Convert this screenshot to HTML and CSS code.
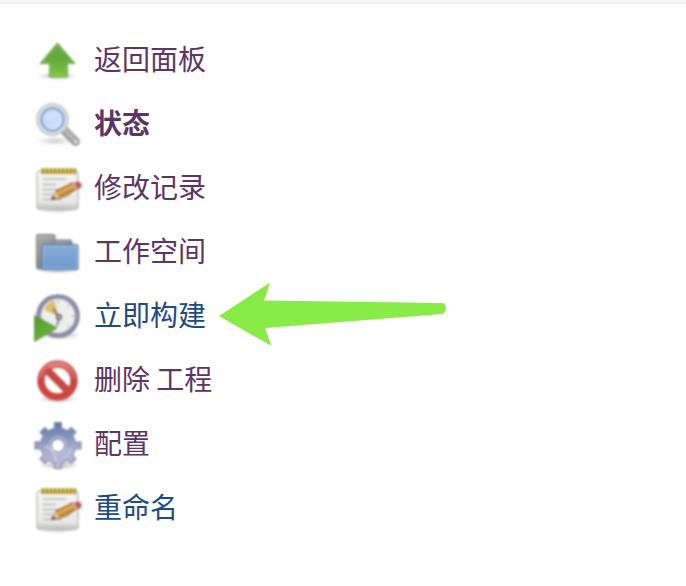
FILE: index.html
```
<!DOCTYPE html>
<html lang="zh-CN">
<head>
<meta charset="utf-8">
<meta name="viewport" content="width=device-width, initial-scale=1">
<title>工程</title>
<link rel="stylesheet" href="styles.css">
</head>
<body>
<svg class="defs" aria-hidden="true">
  <defs>
    <linearGradient id="green" x1="0" y1="0" x2="0" y2="1"><stop offset="0" stop-color="#6aa948"/><stop offset=".5" stop-color="#62a93b"/><stop offset="1" stop-color="#85c83e"/></linearGradient>
    <radialGradient id="shade"><stop offset="0" stop-color="#000" stop-opacity=".3"/><stop offset="1" stop-color="#000" stop-opacity="0"/></radialGradient>
    <linearGradient id="lens" x1="0" y1="0" x2="1" y2="1"><stop offset="0" stop-color="#b3cff1"/><stop offset=".6" stop-color="#c9def7"/><stop offset="1" stop-color="#e4effc"/></linearGradient>
    <linearGradient id="paper" x1="0" y1="0" x2="0" y2="1"><stop offset="0" stop-color="#f4f4f3"/><stop offset=".8" stop-color="#e9e9e8"/><stop offset="1" stop-color="#cfcfce"/></linearGradient>
    <linearGradient id="back" x1="0" y1="0" x2="1" y2="1"><stop offset="0" stop-color="#adadad"/><stop offset="1" stop-color="#666"/></linearGradient>
    <linearGradient id="front" x1="0" y1="0" x2="0" y2="1"><stop offset="0" stop-color="#89add9"/><stop offset="1" stop-color="#6d98cc"/></linearGradient>
    <linearGradient id="red" x1="0" y1="0" x2="0" y2="1"><stop offset="0" stop-color="#dc7974"/><stop offset=".5" stop-color="#c9433f"/><stop offset="1" stop-color="#d6433d"/></linearGradient>
    <linearGradient id="gear" gradientUnits="userSpaceOnUse" x1="20" y1="0" x2="26" y2="47"><stop offset="0" stop-color="#6079a5"/><stop offset=".4" stop-color="#8b9ac0"/><stop offset=".65" stop-color="#aeb0d0"/><stop offset="1" stop-color="#c0b9da"/></linearGradient>
    <linearGradient id="play" x1="0" y1="0" x2="1" y2="1"><stop offset="0" stop-color="#4f9a2c"/><stop offset="1" stop-color="#74be3a"/></linearGradient>
    <symbol id="notepad" viewBox="0 0 48 48">
      <ellipse cx="24" cy="43" rx="23" ry="4" fill="url(#shade)"/>
      <rect x="3" y="5" width="41" height="38" rx="2" fill="url(#paper)" stroke="#a9a9a7"/>
      <path d="M4 40h39" stroke="#bcbcba" stroke-width="1"/>
      <rect x="7" y="3" width="35" height="5" fill="#d5c363"/>
      <path d="M9 2v6M13 2v6M17 2v6M21 2v6M25 2v6M29 2v6M33 2v6M37 2v6M41 2v6" stroke="#a8922f" stroke-width="2.200"/>
      <path d="M9 13h23M9 18.500h13M9 23.500h19M9 28.500h11M9 33.500h19" stroke="#b9b9b8" stroke-width="1.600"/>
      <path d="M19 34l15-3 7-7-15 6z" fill="#000" opacity=".18"/>
      <path d="M18 33l4-8 17-8.500 4 6.500-17 9z" fill="#c98d35" stroke="#93692d"/>
      <path d="M23 27l16-8 1 1.500-16 8z" fill="#e9b969"/>
      <path d="M18 33l3.500-7 4 5.500z" fill="#e3cca0"/><path d="M16.500 33.500l3-3.500 2 3z" fill="#55493d"/>
      <path d="M38 17.500l3-1.500 3.500 6-3 1.500z" fill="#b9b9b9"/>
      <path d="M41 17l2-1q3-.5 4 2t-1 4l-2 1z" fill="#dc5553" stroke="#b43e3d" stroke-width=".6"/>
    </symbol>
  </defs>
</svg>
<header class="topbar"></header>
<nav class="tasks" aria-label="工程">
  <a class="task" href="#"><svg class="icon" viewBox="0 0 48 48" aria-hidden="true">
    <ellipse cx="23" cy="38" rx="20" ry="4" fill="url(#shade)"/>
    <path d="M23.500 5L41 25.500h-7.500V39h-18V25.500H6z" fill="url(#green)" stroke="#6a9c4a" stroke-linejoin="round"/>
    <path d="M23.500 7.500L38 24h-5.500v13.500h-16V24H9z" fill="none" stroke="#a6dc73" stroke-opacity=".4"/></svg><span>返回面板</span></a>
  <a class="task current" href="#"><svg class="icon" viewBox="0 0 48 48" aria-hidden="true">
    <ellipse cx="21" cy="39" rx="20" ry="5" fill="url(#shade)" opacity=".6"/>
    <path d="M29 27L41.500 39.500" stroke="#8d8d8d" stroke-width="8.500" stroke-linecap="round"/>
    <path d="M29 26.500L41.500 39" stroke="#b4b4b4" stroke-width="5.500" stroke-linecap="round"/>
    <circle cx="42" cy="40" r="1.600" fill="#eee"/>
    <circle cx="18.500" cy="17.500" r="13.500" fill="url(#lens)" stroke="#b9b9b8" stroke-width="5.500"/>
    <circle cx="18.500" cy="17.500" r="13.500" fill="none" stroke="#e2e2e0" stroke-width="3"/>
    <circle cx="18.500" cy="17.500" r="11.300" fill="none" stroke="#85a8d9" stroke-width="2.200"/>
    <path d="M9.500 18a9 9 0 0 1 17-4q-5 0-8 3t-9 1z" fill="#fff" opacity=".2"/></svg><span>状态</span></a>
  <a class="task" href="#"><svg class="icon" aria-hidden="true"><use href="#notepad"/></svg><span>修改记录</span></a>
  <a class="task" href="#"><svg class="icon" viewBox="0 0 48 48" aria-hidden="true">
    <ellipse cx="24" cy="40" rx="23" ry="4" fill="url(#shade)"/>
    <path d="M2.500 38V6q0-1.500 1.500-1.500h15.500q1.500 0 1.500 1.500v4h15q2 0 2 2v27h-34z" fill="url(#back)" stroke="#818181"/>
    <path d="M4 7h15M22 12h14" stroke="#c9c9c9" opacity=".7"/>
    <rect x="8" y="14.500" width="36" height="25" rx="1.500" fill="url(#front)" stroke="#4777b2"/>
    <rect x="9.500" y="16" width="33" height="22" fill="none" stroke="#b1cbea" stroke-opacity=".6"/></svg><span>工作空间</span></a>
  <a class="task fresh" href="#"><svg class="icon" viewBox="0 0 48 48" aria-hidden="true">
    <ellipse cx="26" cy="41" rx="21" ry="5" fill="url(#shade)"/>
    <circle cx="24" cy="22" r="19.500" fill="#eeeeec" stroke="#8281a0" stroke-width="4.500"/>
    <circle cx="24" cy="22" r="19.500" fill="none" stroke="#9796b2" stroke-width="1.500"/>
    <circle cx="24" cy="22" r="17" fill="none" stroke="#cbcac6"/>
    <path d="M24 22L11 15q3-6 8.500-8z" fill="#e2c06b" stroke="#c4a353" stroke-width=".8"/>
    <path d="M25 23l-6-9M25 23l-2 9" stroke="#77756f" stroke-width="1.500"/>
    <circle cx="25" cy="23" r="2.300" fill="#e9e9e7" stroke="#555" stroke-width="1.500"/>
    <path d="M24 7v2M38 22h2M34 12l1-1M34 32l1 1" stroke="#aaa" stroke-width="1.500"/>
    <path d="M.5 21.500L23 34 .5 47.500z" fill="url(#play)" stroke="#69954f"/></svg><span>立即构建</span>
    <svg class="pointer" viewBox="0 0 228 66" aria-hidden="true"><path d="M0 34L51 .5 45 18.500 222 21q5 0 5 5t-4 6L46 46l6.500 18z" fill="#89eb47"/></svg></a>
  <a class="task" href="#"><svg class="icon" viewBox="0 0 48 48" aria-hidden="true">
    <ellipse cx="24" cy="41" rx="20" ry="4" fill="url(#shade)"/>
    <circle cx="23.500" cy="22.500" r="16.500" fill="#fff" stroke="#c05a56" stroke-width="7.500"/>
    <path d="M12 11l23 23" stroke="#b94743" stroke-width="7.500"/>
    <circle cx="23.500" cy="22.500" r="16.500" fill="none" stroke="url(#red)" stroke-width="5.500"/>
    <path d="M12 11l23 23" stroke="#cb4843" stroke-width="5.500"/>
    <path d="M6 20a18 18 0 0 1 35 0" fill="none" stroke="#eba5a0" stroke-opacity=".6"/></svg><span>删除 工程</span></a>
  <a class="task" href="#"><svg class="icon" viewBox="0 0 48 48" aria-hidden="true">
    <ellipse cx="25" cy="43" rx="21" ry="5" fill="url(#shade)"/>
    <g fill="none" stroke="#7f86a6">
      <circle cx="24" cy="23.500" r="12" stroke-width="12"/>
      <path stroke-width="8" d="M24 0v10M24 37v10M.5 23.500h10M37.500 23.500h10M8 7.500l7 7M33 32.500l7 7M40 7.500l-7 7M15 32.500l-7 7"/>
    </g>
    <g fill="none" stroke="url(#gear)">
      <circle cx="24" cy="23.500" r="12" stroke-width="10.500"/>
      <path stroke-width="6" d="M24.010 1L24 10M24.010 37L24 46M1.500 23.510l9-.01M37.500 23.510l9-.01M9 8.500l6 6M33 32.500l6 6M39 8.500l-6 6M15 32.500l-6 6"/>
    </g>
    <circle cx="24" cy="23.500" r="8.500" fill="none" stroke="#c7cde1" stroke-width="2" opacity=".6"/>
    <path d="M10 25q11 0 12 14M30 35q6-3 7-9" fill="none" stroke="#dfe0ef" stroke-width="2.500" opacity=".45"/></svg><span>配置</span></a>
  <a class="task fresh" href="#"><svg class="icon" aria-hidden="true"><use href="#notepad"/></svg><span>重命名</span></a>
</nav>
</body>
</html>
```
FILE: styles.css
```
body {
  margin: 0;
  background: #fff;
  font-family: "Noto Sans CJK SC", sans-serif;
  font-size: 28px;
  line-height: 40px;
}

.defs {
  position: absolute;
  width: 0;
  height: 0;
}

.topbar {
  height: 2px;
  background: #f7f7f7;
  border-bottom: 2px solid #e9eef3;
}

.tasks {
  display: flex;
  flex-direction: column;
  align-items: flex-start;
  gap: 16px;
  padding: 34px 34px 36px;
}

.task {
  position: relative;
  display: flex;
  align-items: flex-start;
  gap: 12px;
  color: #5c3566;
  text-decoration: none;
  white-space: nowrap;
}

.fresh {
  color: #204a87;
}

.current {
  font-weight: bold;
}

/* Soft edges on the shaded icons */
.icon {
  flex: none;
  width: 48px;
  height: 48px;
  filter: blur(1px);
}

.pointer {
  position: absolute;
  left: 100%;
  top: -12px;
  width: 228px;
  height: 66px;
  margin-left: 13px;
}
```
